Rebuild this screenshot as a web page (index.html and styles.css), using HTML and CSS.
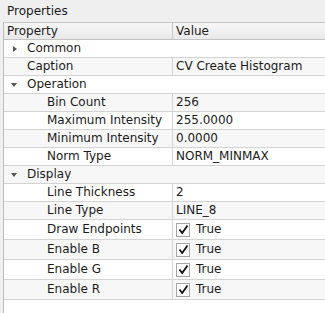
FILE: index.html
```html
<!DOCTYPE html>
<html lang="en">
<head>
    <meta charset="UTF-8">
    <title>Properties</title>
    <link rel="stylesheet" href="styles.css">
</head>
<body>
    <div class="panel">
        <div class="title">Properties</div>
        <div class="tree">
            <div class="row header">
                <div class="cell name">Property</div>
                <div class="cell value">Value</div>
            </div>

            <div class="row group">
                <div class="cell name"><span class="arrow closed"></span>Common</div>
            </div>
            <div class="row alt">
                <div class="cell name lvl1">Caption</div>
                <div class="cell value">CV Create Histogram</div>
            </div>

            <div class="row group">
                <div class="cell name"><span class="arrow open"></span>Operation</div>
            </div>
            <div class="row alt">
                <div class="cell name lvl2">Bin Count</div>
                <div class="cell value">256</div>
            </div>
            <div class="row">
                <div class="cell name lvl2">Maximum Intensity</div>
                <div class="cell value">255.0000</div>
            </div>
            <div class="row alt">
                <div class="cell name lvl2">Minimum Intensity</div>
                <div class="cell value">0.0000</div>
            </div>
            <div class="row">
                <div class="cell name lvl2">Norm Type</div>
                <div class="cell value">NORM_MINMAX</div>
            </div>

            <div class="row group alt">
                <div class="cell name"><span class="arrow open"></span>Display</div>
            </div>
            <div class="row">
                <div class="cell name lvl2">Line Thickness</div>
                <div class="cell value">2</div>
            </div>
            <div class="row alt">
                <div class="cell name lvl2">Line Type</div>
                <div class="cell value">LINE_8</div>
            </div>
            <div class="row check">
                <div class="cell name lvl2">Draw Endpoints</div>
                <div class="cell value"><span class="box"><svg width="11" height="11" viewBox="0 0 11 11"><path d="M1.5 5.5 L4.2 9 L9.5 1.5" fill="none" stroke="#111" stroke-width="1.8"/></svg></span>True</div>
            </div>
            <div class="row check alt">
                <div class="cell name lvl2">Enable B</div>
                <div class="cell value"><span class="box"><svg width="11" height="11" viewBox="0 0 11 11"><path d="M1.5 5.5 L4.2 9 L9.5 1.5" fill="none" stroke="#111" stroke-width="1.8"/></svg></span>True</div>
            </div>
            <div class="row check">
                <div class="cell name lvl2">Enable G</div>
                <div class="cell value"><span class="box"><svg width="11" height="11" viewBox="0 0 11 11"><path d="M1.5 5.5 L4.2 9 L9.5 1.5" fill="none" stroke="#111" stroke-width="1.8"/></svg></span>True</div>
            </div>
            <div class="row check alt">
                <div class="cell name lvl2">Enable R</div>
                <div class="cell value"><span class="box"><svg width="11" height="11" viewBox="0 0 11 11"><path d="M1.5 5.5 L4.2 9 L9.5 1.5" fill="none" stroke="#111" stroke-width="1.8"/></svg></span>True</div>
            </div>
        </div>
    </div>
</body>
</html>
```

FILE: styles.css
```css
html, body {
    margin: 0;
    height: 100%;
}

body {
    font-family: "DejaVu Sans", sans-serif;
    font-size: 12px;
    color: #1b1b1b;
    background-color: #efefef;
    overflow: hidden;
}

.panel {
    display: flex;
    flex-direction: column;
    height: 100%;
}

.title {
    height: 22px;
    line-height: 22px;
    padding-left: 7px;
    box-sizing: border-box;
    padding-top: 0;
}

.tree {
    flex: 1;
    margin-left: 3px;
    background-color: white;
    border-left: 1px solid #bdbdbd;
    border-top: 1px solid #c4c4c4;
}

.row {
    display: flex;
    height: 17px;
    line-height: 17px;
    border-bottom: 1px solid #d3d3d3;
    background-color: white;
}

.row.alt {
    background-color: #f7f7f7;
}

.row.check {
    height: 19px;
    line-height: 19px;
}

.header {
    height: 16px;
    line-height: 16px;
    background: linear-gradient(#f7f7f7, #e9e9e9);
    border-bottom: 1px solid #c4c4c4;
}

.cell {
    white-space: nowrap;
    overflow: hidden;
}

.name {
    width: 165px;
    padding-left: 3px;
    flex-shrink: 0;
}

.group .name {
    width: auto;
}

.value {
    flex: 1;
    border-left: 1px solid #d3d3d3;
    padding-left: 3px;
    display: flex;
    align-items: center;
}

.header .value {
    border-left-color: #c4c4c4;
}

.lvl1 {
    padding-left: 23px;
    width: 145px;
}

.lvl2 {
    padding-left: 43px;
    width: 125px;
}

.arrow {
    display: inline-block;
    width: 20px;
    height: 17px;
    vertical-align: top;
    position: relative;
}

.arrow::after {
    content: "";
    position: absolute;
    width: 0;
    height: 0;
}

.arrow.closed::after {
    left: 6px;
    top: 6px;
    border-top: 3px solid transparent;
    border-bottom: 3px solid transparent;
    border-left: 4px solid #555;
}

.arrow.open::after {
    left: 4px;
    top: 7px;
    border-left: 3px solid transparent;
    border-right: 3px solid transparent;
    border-top: 4px solid #555;
}

.box {
    width: 12px;
    height: 12px;
    border: 1px solid #a6a6a6;
    background-color: white;
    display: flex;
    align-items: center;
    justify-content: center;
    margin-right: 6px;
}

.box svg {
    display: block;
}
```
